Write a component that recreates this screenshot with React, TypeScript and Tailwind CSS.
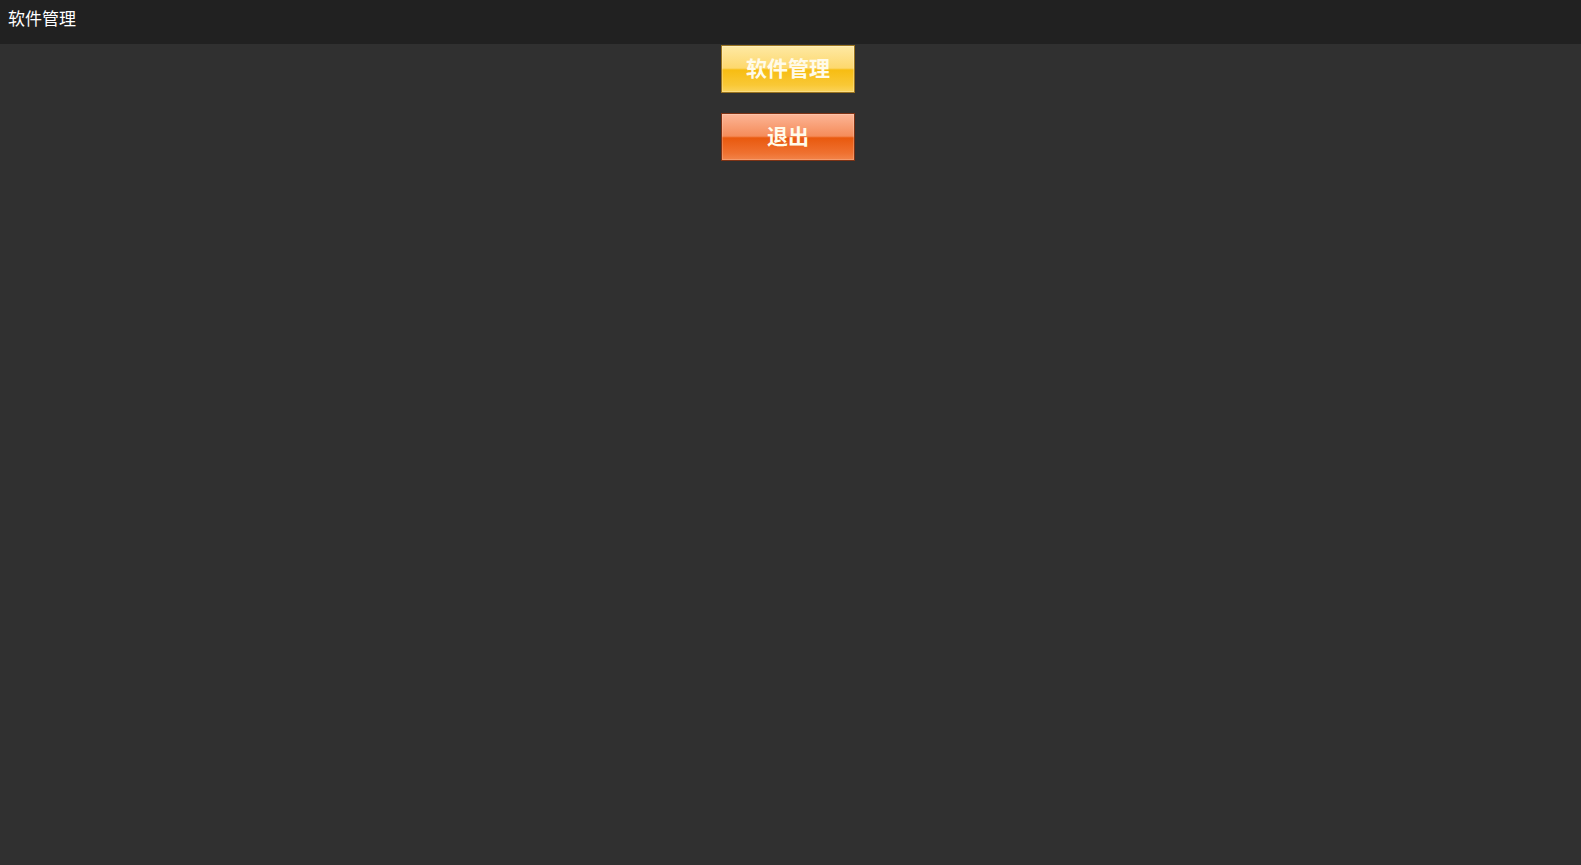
import React from "react";

export default function App() {
  const font = { fontFamily: '"Noto Sans CJK SC", "Noto Sans", sans-serif' };
  return (
    <div className="min-h-screen w-full bg-[#303030] flex flex-col" style={font}>
      <header className="h-[44px] bg-[#212121] px-2 pt-[8px] shrink-0">
        <div className="text-[17px] leading-[20px] text-white">软件管理</div>
      </header>
      <main className="flex flex-col items-center gap-[20px] pt-[1px] pr-[5px]">
        <button className="w-[134px] h-[48px] border border-[#9a7420] bg-[linear-gradient(to_bottom,#fee9a4_0%,#fdd86e_48%,#f7bd12_52%,#f9c836_85%,#fbd35a_100%)] shadow-[inset_0_0_0_1px_rgba(255,255,255,0.25)] flex items-center justify-center pb-[3px] text-[21px] font-bold text-[#fffbea] leading-none">
          软件管理
        </button>
        <button className="w-[134px] h-[48px] border border-[#7e3214] bg-[linear-gradient(to_bottom,#fcb596_0%,#f58c5a_48%,#e9590e_52%,#ef7130_85%,#f2844a_100%)] shadow-[inset_0_0_0_1px_rgba(255,255,255,0.2)] flex items-center justify-center pb-[3px] text-[21px] font-bold text-[#fffbea] leading-none">
          退出
        </button>
      </main>
    </div>
  );
}
